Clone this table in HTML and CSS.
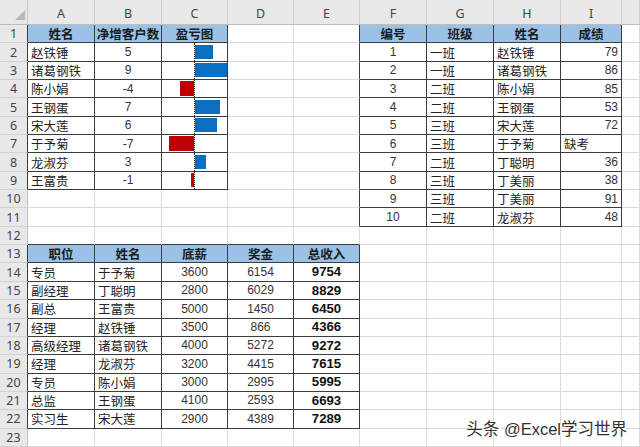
FILE: index.html
```html
<!DOCTYPE html>
<html lang="zh">
<head>
<meta charset="utf-8">
<title>Excel</title>
<link rel="stylesheet" href="styles.css">
</head>
<body>
<div class="sheet">
  <div class="corner"><span class="tri"></span></div><div class="ch">A</div><div class="ch">B</div><div class="ch">C</div><div class="ch">D</div><div class="ch">E</div><div class="ch">F</div><div class="ch">G</div><div class="ch">H</div><div class="ch">I</div><div class="ch"></div>

  <div class="rh x">1</div><div class="h">姓名</div><div class="h">净增客户数</div><div class="h">盈亏图</div><div></div><div class="x"></div><div class="h">编号</div><div class="h">班级</div><div class="h">姓名</div><div class="h">成绩</div><div></div>

  <div class="rh x">2</div><div class="t">赵铁锤</div><div class="t c n">5</div><div class="t bars"><span class="neg"></span><span class="pos"><b style="width:17.9px"></b></span></div><div></div><div class="x"></div><div class="t c n">1</div><div class="t">一班</div><div class="t">赵铁锤</div><div class="t r n">79</div><div></div>

  <div class="rh x">3</div><div class="t">诸葛钢铁</div><div class="t c n">9</div><div class="t bars"><span class="neg"></span><span class="pos"><b style="width:32px"></b></span></div><div></div><div class="x"></div><div class="t c n">2</div><div class="t">一班</div><div class="t">诸葛钢铁</div><div class="t r n">86</div><div></div>

  <div class="rh x">4</div><div class="t">陈小娟</div><div class="t c n">-4</div><div class="t bars"><span class="neg"><b style="width:14.3px"></b></span><span class="pos"></span></div><div></div><div class="x"></div><div class="t c n">3</div><div class="t">二班</div><div class="t">陈小娟</div><div class="t r n">85</div><div></div>

  <div class="rh x">5</div><div class="t">王钢蛋</div><div class="t c n">7</div><div class="t bars"><span class="neg"></span><span class="pos"><b style="width:25.1px"></b></span></div><div></div><div class="x"></div><div class="t c n">4</div><div class="t">二班</div><div class="t">王钢蛋</div><div class="t r n">53</div><div></div>

  <div class="rh x">6</div><div class="t">宋大莲</div><div class="t c n">6</div><div class="t bars"><span class="neg"></span><span class="pos"><b style="width:21.8px"></b></span></div><div></div><div class="x"></div><div class="t c n">5</div><div class="t">三班</div><div class="t">宋大莲</div><div class="t r n">72</div><div></div>

  <div class="rh x">7</div><div class="t">于予菊</div><div class="t c n">-7</div><div class="t bars"><span class="neg"><b style="width:25px"></b></span><span class="pos"></span></div><div></div><div class="x"></div><div class="t c n">6</div><div class="t">三班</div><div class="t">于予菊</div><div class="t">缺考</div><div></div>

  <div class="rh x">8</div><div class="t">龙淑芬</div><div class="t c n">3</div><div class="t bars"><span class="neg"></span><span class="pos"><b style="width:11.2px"></b></span></div><div></div><div class="x"></div><div class="t c n">7</div><div class="t">二班</div><div class="t">丁聪明</div><div class="t r n">36</div><div></div>

  <div class="rh x">9</div><div class="t">王富贵</div><div class="t c n">-1</div><div class="t bars"><span class="neg"><b style="width:3.4px"></b></span><span class="pos"></span></div><div></div><div class="x"></div><div class="t c n">8</div><div class="t">三班</div><div class="t">丁美丽</div><div class="t r n">38</div><div></div>

  <div class="rh">10</div><div></div><div></div><div></div><div></div><div class="x"></div><div class="t c n">9</div><div class="t">三班</div><div class="t">丁美丽</div><div class="t r n">91</div><div></div>

  <div class="rh">11</div><div></div><div></div><div></div><div></div><div class="x"></div><div class="t c n">10</div><div class="t">二班</div><div class="t">龙淑芬</div><div class="t r n">48</div><div></div>

  <div class="rh">12</div><div class="y"></div><div class="y"></div><div class="y"></div><div class="y"></div><div class="y"></div><div></div><div></div><div></div><div></div><div></div>

  <div class="rh x">13</div><div class="h">职位</div><div class="h">姓名</div><div class="h">底薪</div><div class="h">奖金</div><div class="h">总收入</div><div></div><div></div><div></div><div></div><div></div>

  <div class="rh x">14</div><div class="t">专员</div><div class="t">于予菊</div><div class="t c n">3600</div><div class="t c n">6154</div><div class="t c bn">9754</div><div></div><div></div><div></div><div></div><div></div>

  <div class="rh x">15</div><div class="t">副经理</div><div class="t">丁聪明</div><div class="t c n">2800</div><div class="t c n">6029</div><div class="t c bn">8829</div><div></div><div></div><div></div><div></div><div></div>

  <div class="rh x">16</div><div class="t">副总</div><div class="t">王富贵</div><div class="t c n">5000</div><div class="t c n">1450</div><div class="t c bn">6450</div><div></div><div></div><div></div><div></div><div></div>

  <div class="rh x">17</div><div class="t">经理</div><div class="t">赵铁锤</div><div class="t c n">3500</div><div class="t c n">866</div><div class="t c bn">4366</div><div></div><div></div><div></div><div></div><div></div>

  <div class="rh x">18</div><div class="t">高级经理</div><div class="t">诸葛钢铁</div><div class="t c n">4000</div><div class="t c n">5272</div><div class="t c bn">9272</div><div></div><div></div><div></div><div></div><div></div>

  <div class="rh x">19</div><div class="t">经理</div><div class="t">龙淑芬</div><div class="t c n">3200</div><div class="t c n">4415</div><div class="t c bn">7615</div><div></div><div></div><div></div><div></div><div></div>

  <div class="rh x">20</div><div class="t">专员</div><div class="t">陈小娟</div><div class="t c n">3000</div><div class="t c n">2995</div><div class="t c bn">5995</div><div></div><div></div><div></div><div></div><div></div>

  <div class="rh x">21</div><div class="t">总监</div><div class="t">王钢蛋</div><div class="t c n">4100</div><div class="t c n">2593</div><div class="t c bn">6693</div><div></div><div></div><div></div><div></div><div></div>

  <div class="rh x">22</div><div class="t">实习生</div><div class="t">宋大莲</div><div class="t c n">2900</div><div class="t c n">4389</div><div class="t c bn">7289</div><div></div><div></div><div></div><div></div><div></div>

  <div class="rh">23</div><div></div><div></div><div></div><div></div><div></div><div></div><div></div><div></div><div></div><div></div>

  <p class="mark">头条 @Excel学习世界</p>
</div>
</body>
</html>
```

FILE: styles.css
```css
html, body {
  margin: 0;
  padding: 0;
  background: #ffffff;
  overflow: hidden;
}

.sheet {
  position: relative;
  display: grid;
  grid-template-columns: 28px 67px 67px 66px 66px 66px 67px 67px 67px 61px 1fr;
  grid-template-rows: 25px repeat(23, 18.35px);
  width: 640px;
  height: 447px;
  font-family: "Noto Sans CJK SC", "Noto Sans", sans-serif;
  color: #222;
}

.sheet > div {
  box-sizing: border-box;
  min-width: 0;
  min-height: 0;
  border-right: 1px solid #dadada;
  border-bottom: 1px solid #dadada;
  display: flex;
  align-items: center;
  padding: 0 3px;
  font-size: 12.5px;
  line-height: 1.2;
  white-space: nowrap;
}

/* headers */
.sheet > .corner {
  background: #e8e8e8;
  border-right: 1px solid #c9c9c9;
  border-bottom: 1px solid #bdbdbd;
  justify-content: flex-end;
  align-items: flex-end;
  padding: 0 2px 4px 0;
}
.tri {
  width: 0;
  height: 0;
  border-left: 10px solid transparent;
  border-bottom: 10px solid #b9b9b9;
}
.sheet > .ch {
  background: #e8e8e8;
  border-right: 1px solid #cdcdcd;
  border-bottom: 1px solid #bdbdbd;
  justify-content: center;
  padding-top: 3px;
  font-family: "Noto Sans", sans-serif;
  font-size: 12.5px;
  color: #444;
}
.sheet > .rh {
  background: #e8e8e8;
  border-right: 1px solid #bdbdbd;
  border-bottom: 1px solid #d2d2d2;
  justify-content: center;
  font-family: "Noto Sans", sans-serif;
  font-size: 12.5px;
  color: #444;
}

/* table borders */
.sheet > .x { border-right-color: #3c3c3c; }
.sheet > .y { border-bottom-color: #3c3c3c; }
.sheet > .t,
.sheet > .h {
  border-right-color: #3c3c3c;
  border-bottom-color: #3c3c3c;
}
.sheet > .h {
  background: #9bc2e6;
  font-weight: bold;
  justify-content: center;
  color: #1a1a1a;
}

.sheet > .c { justify-content: center; }
.sheet > .r { justify-content: flex-end; }

.sheet > .n {
  font-family: "Liberation Sans", Arial, sans-serif;
  font-size: 12px;
  color: #333;
}
.sheet > .bn {
  font-family: "Liberation Sans", Arial, sans-serif;
  font-size: 13.2px;
  font-weight: bold;
  color: #111;
}

/* data bars */
.sheet > .bars {
  padding: 0;
  align-items: stretch;
}
.neg {
  width: 32px;
  flex: none;
  display: flex;
  justify-content: flex-end;
  align-items: flex-start;
  border-right: 1px dotted #222;
}
.pos {
  flex: 1;
  display: flex;
  align-items: flex-start;
}
.neg b,
.pos b {
  display: block;
  height: 14.4px;
  margin-top: 1.3px;
}
.neg b { background: #c00000; }
.pos b { background: #0b6fc1; }

/* watermark overlay */
.mark {
  position: absolute;
  right: 13px;
  bottom: 7px;
  margin: 0;
  font-family: "Liberation Sans", "Noto Sans CJK SC", sans-serif;
  font-size: 16.5px;
  line-height: 1.2;
  color: #333;
  text-shadow: 0 0 2px #fff, 0 0 2px #fff, 1px 1px 0 #fff;
}
```
